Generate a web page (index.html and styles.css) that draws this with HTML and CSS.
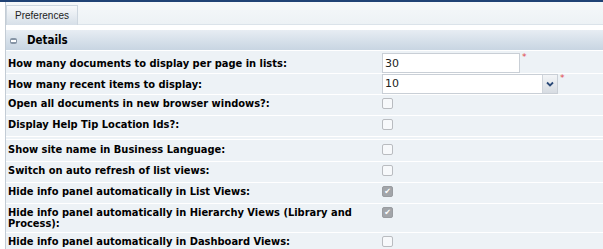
FILE: index.html
```html
<!DOCTYPE html>
<html>
<head>
	<title>Preferences</title>
	<meta charset="utf-8">
	<link rel="stylesheet" href="styles.css">
</head>
<body>
	<div class="topline"></div>
	<div class="page">
		<div class="tabbar">
			<div class="tab">Preferences</div>
		</div>
		<div class="panel">
			<div class="panel-head"><span class="toggle"></span>Details</div>

			<div class="row input-row first">
				<label>How many documents to display per page in lists:</label>
				<div class="control">
					<input type="text" class="textbox" value="30"><span class="req">*</span>
				</div>
			</div>
			<div class="row input-row">
				<label>How many recent items to display:</label>
				<div class="control">
					<div class="select">
						<span class="select-value">10</span>
						<span class="select-btn">
							<svg width="8" height="6" viewBox="0 0 8 6"><polyline points="1,1.5 4,4.5 7,1.5" fill="none" stroke="#2b4a78" stroke-width="1.8"/></svg>
						</span>
					</div><span class="req">*</span>
				</div>
			</div>
			<div class="row">
				<label>Open all documents in new browser windows?:</label>
				<div class="control"><span class="check"></span></div>
			</div>
			<div class="row">
				<label>Display Help Tip Location Ids?:</label>
				<div class="control"><span class="check"></span></div>
			</div>
			<div class="row group">
				<label>Show site name in Business Language:</label>
				<div class="control"><span class="check"></span></div>
			</div>
			<div class="row">
				<label>Switch on auto refresh of list views:</label>
				<div class="control"><span class="check"></span></div>
			</div>
			<div class="row">
				<label>Hide info panel automatically in List Views:</label>
				<div class="control"><span class="check on">&#10004;</span></div>
			</div>
			<div class="row">
				<label>Hide info panel automatically in Hierarchy Views (Library and Process):</label>
				<div class="control"><span class="check on">&#10004;</span></div>
			</div>
			<div class="row">
				<label>Hide info panel automatically in Dashboard Views:</label>
				<div class="control"><span class="check"></span></div>
			</div>
		</div>
	</div>
</body>
</html>
```

FILE: styles.css
```css
*{
	box-sizing: border-box;
}

body{
	margin: 0;
	background: #fff;
	font-family: "DejaVu Sans", Verdana, sans-serif;
	color: #111;
	overflow: hidden;
}

.topline{
	height: 2px;
	background: #1f4275;
}

.page{
	margin-left: 5px;
	border-left: 1px solid #c3ccd5;
}

.tabbar{
	height: 23px;
	padding-top: 2px;
	background: linear-gradient(#f5f8fa, #edf2f5);
	border-bottom: 1px solid #dbe3ea;
}

.tab{
	display: inline-block;
	width: 72px;
	height: 20px;
	line-height: 19px;
	text-align: center;
	font-family: "Liberation Sans", Arial, sans-serif;
	font-size: 10px;
	color: #222;
	background: linear-gradient(#f7f9fb, #d6dfe8);
	border: 1px solid #cdd6df;
	border-bottom: none;
}

.panel{
	margin-top: 5px;
}

.panel-head{
	height: 20px;
	line-height: 20px;
	padding-left: 4px;
	font-weight: bold;
	font-size: 11.5px;
	font-stretch: condensed;
	font-family: "DejaVu Sans Condensed", "DejaVu Sans", sans-serif;
	color: #000;
	background: linear-gradient(#e7edf3, #c8d5e2);
}

.toggle{
	display: inline-block;
	width: 7px;
	height: 6px;
	margin: 0 10px 0 0;
	vertical-align: 0;
	border-radius: 2px;
	background: #8795a6;
	position: relative;
}

.toggle::after{
	content: "";
	position: absolute;
	left: 1px;
	right: 1px;
	top: 2px;
	height: 2px;
	background: #fff;
}

.row{
	display: grid;
	grid-template-columns: 376px 1fr;
	min-height: 21px;
	padding: 3px 0;
	border-top: 1px solid #fff;
	background: #edf2f6;
	line-height: 11px;
}

.row label{
	padding-left: 2px;
	padding-right: 10px;
	font-weight: bold;
	font-size: 11px;
	font-stretch: condensed;
	font-family: "DejaVu Sans Condensed", "DejaVu Sans", sans-serif;
	color: #000;
}

.row.group{
	min-height: 25px;
	padding-top: 4px;
	border-top: 4px double #fff;
}

.input-row{
	padding: 0;
	align-items: center;
}

.input-row.first{
	min-height: 23px;
	padding-top: 2px;
}

.control{
	display: flex;
	align-items: flex-start;
}

.textbox{
	width: 138px;
	height: 20px;
	margin: 0;
	padding: 0 2px;
	border: 1px solid #c9cfd6;
	background: #fff;
	font-family: "DejaVu Sans", Verdana, sans-serif;
	font-size: 11px;
	color: #222;
	outline: none;
}

.select{
	display: flex;
	width: 176px;
	height: 20px;
	border: 1px solid #c9cfd6;
	background: #fff;
}

.select-value{
	flex: 1;
	padding-left: 2px;
	line-height: 18px;
	font-size: 11px;
	color: #222;
}

.select-btn{
	width: 15px;
	display: flex;
	align-items: center;
	justify-content: center;
	border-left: 1px solid #d0d5db;
	background: linear-gradient(#f3f5f7, #d7dce2);
}

.req{
	color: #e0474c;
	font-size: 9px;
	line-height: 9px;
	margin-left: 2px;
}

.check{
	display: inline-block;
	width: 11px;
	height: 11px;
	border: 1px solid #b9bcc0;
	border-radius: 2px;
	background: #f7f9fb;
	font-size: 8px;
	line-height: 9px;
	text-align: center;
	color: #fff;
}

.check.on{
	background: #a2a5a9;
	border-color: #999ca0;
}
```
